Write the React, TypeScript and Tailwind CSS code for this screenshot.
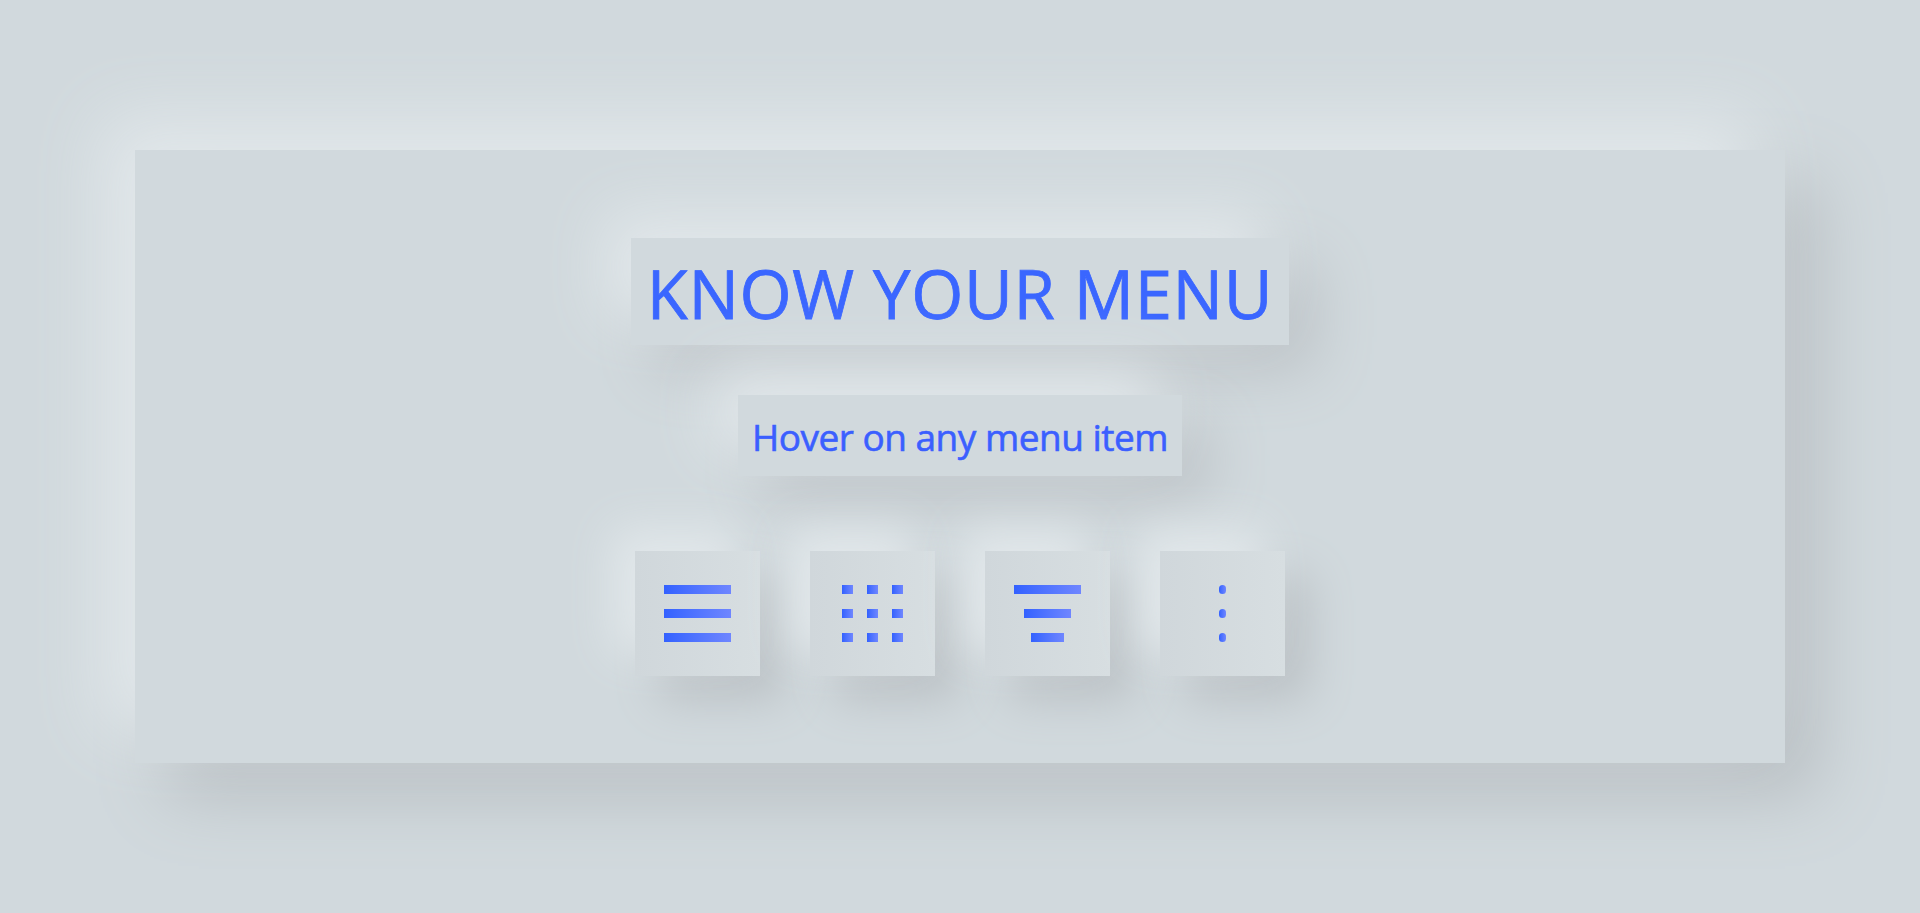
const tile =
  "flex h-[125px] w-[125px] items-center justify-center bg-gradient-to-r from-[#d0d7db] to-[#d7dee1] shadow-[-22px_-22px_45px_#e2e8eb,24px_24px_45px_#bbc1c5]";
const bar = "h-[9px] bg-gradient-to-r from-[#3361ff] to-[#6f86ff]";

function MenuIcon() {
  return (
    <div className="flex flex-col gap-[15px]">
      <div className={`${bar} w-[67px]`} />
      <div className={`${bar} w-[67px]`} />
      <div className={`${bar} w-[67px]`} />
    </div>
  );
}

function GridIcon() {
  const dots = [0, 1, 2, 3, 4, 5, 6, 7, 8];
  return (
    <div className="grid grid-cols-3 gap-x-[14px] gap-y-[15px]">
      {dots.map((d) => (
        <div key={d} className={`${bar} w-[11px]`} />
      ))}
    </div>
  );
}

function FilterIcon() {
  return (
    <div className="flex flex-col items-center gap-[15px]">
      <div className={`${bar} w-[67px]`} />
      <div className={`${bar} w-[47px]`} />
      <div className={`${bar} w-[33px]`} />
    </div>
  );
}

function KebabIcon() {
  return (
    <div className="flex flex-col items-center gap-[15px]">
      <div className={`${bar} w-[7px] rounded-full`} />
      <div className={`${bar} w-[7px] rounded-full`} />
      <div className={`${bar} w-[7px] rounded-full`} />
    </div>
  );
}

export default function App() {
  return (
    <div className="flex h-[913px] w-full items-center justify-center bg-[#d1d9dd] font-['Open_Sans',sans-serif]">
      <div className="flex h-[613px] w-[1650px] flex-col items-center justify-center bg-[#d1d9dd] shadow-[-32px_-32px_65px_#e2e8eb,32px_32px_65px_#b8bec2]">
        <h1 className="flex h-[107px] items-center bg-[#d1d9dd] px-[16px] pt-[4px] text-[67px] font-normal leading-none tracking-[0.7px] text-[#3a66ff] [-webkit-text-stroke:0.8px_#3a66ff] shadow-[-25px_-25px_60px_#e2e8eb,25px_25px_60px_#bcc2c6]">
          KNOW YOUR MENU
        </h1>
        <p className="mt-[50px] flex h-[81px] items-center bg-[#d1d9dd] px-[14px] pt-[2px] text-[37px] font-normal leading-none tracking-[-0.5px] text-[#3b5fff] [-webkit-text-stroke:0.6px_#3b5fff] shadow-[-25px_-25px_60px_#e2e8eb,25px_25px_60px_#bcc2c6]">
          Hover on any menu item
        </p>
        <div className="mt-[75px] flex gap-[50px]">
          <div className={tile}>
            <MenuIcon />
          </div>
          <div className={tile}>
            <GridIcon />
          </div>
          <div className={tile}>
            <FilterIcon />
          </div>
          <div className={tile}>
            <KebabIcon />
          </div>
        </div>
      </div>
    </div>
  );
}
